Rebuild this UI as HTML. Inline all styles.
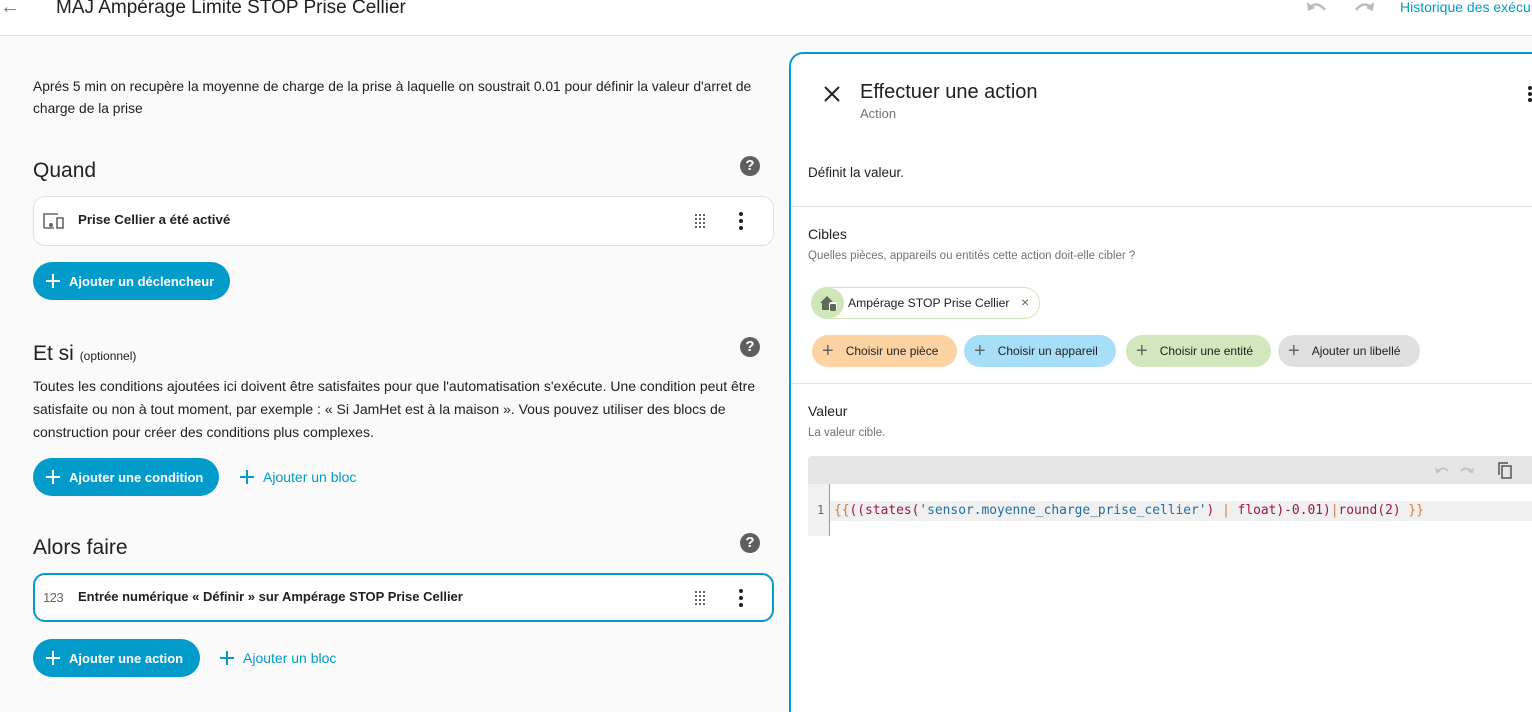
<!DOCTYPE html>
<html><head><meta charset="utf-8"><style>
*{box-sizing:border-box;margin:0;padding:0}
body{width:1532px;height:699px;overflow:hidden;background:#fafafa;font-family:"Liberation Sans",sans-serif;color:#212121;position:relative}
.top{position:absolute;left:0;top:0;width:1532px;height:36px;background:#fff;border-bottom:1px solid #e0e0e0}
.abs{position:absolute;white-space:nowrap}
.btn{position:absolute;height:38px;border-radius:19px;background:#039bc9;color:#fff;font-size:13px;font-weight:bold;display:flex;align-items:center;padding-left:12px}
.btn svg,.lnk svg{margin-right:8px}
.lnk{position:absolute;color:#039bc9;font-size:14px;display:flex;align-items:center}
.card{position:absolute;left:33px;width:741px;height:50px;background:#fff;border:1px solid #e0e0e0;border-radius:12px}
.h2{position:absolute;font-size:21px;color:#212121}
.q{position:absolute;width:20px;height:20px;border-radius:50%;background:#5f5f5f;color:#fff;font-size:15px;font-weight:bold;text-align:center;line-height:20px}
.chip{position:absolute;top:335px;height:32px;border-radius:16px;font-size:12px;display:flex;align-items:center;padding-left:10px;color:#212121}
.chip b{font-weight:normal;font-size:20px;color:#666;margin-right:12px;line-height:1}
</style></head><body>
<div class="top"></div>
<div class="abs" style="left:0;top:-4px;font-size:20px;color:#777">&#8592;</div>
<div class="abs" style="left:56px;top:-3px;font-size:19px;color:#212121">MAJ Ampérage Limite STOP Prise Cellier</div>
<svg class="abs" style="left:1305px;top:0" width="24" height="14" viewBox="0 0 24 14"><path d="M4 8 Q12 0 20 10" stroke="#bbb" stroke-width="2.5" fill="none"/><path d="M2 2 L3 11 L10 8Z" fill="#bbb"/></svg>
<svg class="abs" style="left:1352px;top:0" width="24" height="14" viewBox="0 0 24 14"><path d="M20 8 Q12 0 4 10" stroke="#bbb" stroke-width="2.5" fill="none"/><path d="M22 2 L21 11 L14 8Z" fill="#bbb"/></svg>
<div class="abs" style="left:1400px;top:-1px;font-size:14px;color:#039bc9">Historique des exécu</div>

<div class="abs" style="left:33px;top:76px;font-size:13.8px;line-height:22px;white-space:normal;width:745px">Aprés 5 min on recupère la moyenne de charge de la prise à laquelle on soustrait 0.01 pour définir la valeur d'arret de charge de la prise</div>

<div class="h2" style="left:33px;top:159px">Quand</div>
<div class="q" style="left:740px;top:156px">?</div>
<div class="card" style="top:196px"></div>
<svg class="abs" style="left:43px;top:212px" width="22" height="18" viewBox="0 0 22 18"><path d="M1 16V2h14M1 16h10" stroke="#666" stroke-width="1.6" fill="none"/><rect x="14" y="6" width="6" height="10" stroke="#666" stroke-width="1.6" fill="none"/><circle cx="8" cy="13" r="2" fill="#666"/></svg>
<div class="abs" style="left:78px;top:212px;font-size:13.3px;font-weight:bold">Prise Cellier a été activé</div>
<svg class="abs" style="left:694px;top:213px" width="14" height="16"><g fill="#333"><circle cx="2" cy="2" r="1"/><circle cx="6" cy="2" r="1"/><circle cx="10" cy="2" r="1"/><circle cx="2" cy="6" r="1"/><circle cx="6" cy="6" r="1"/><circle cx="10" cy="6" r="1"/><circle cx="2" cy="10" r="1"/><circle cx="6" cy="10" r="1"/><circle cx="10" cy="10" r="1"/><circle cx="2" cy="14" r="1"/><circle cx="6" cy="14" r="1"/><circle cx="10" cy="14" r="1"/></g></svg>
<svg class="abs" style="left:737px;top:211px" width="8" height="20"><g fill="#212121"><circle cx="4" cy="3" r="2"/><circle cx="4" cy="10" r="2"/><circle cx="4" cy="17" r="2"/></g></svg>

<div class="btn" style="left:33px;top:262px;width:197px"><svg width="16" height="16"><path d="M8 1v14M1 8h14" stroke="#fff" stroke-width="2"/></svg>Ajouter un déclencheur</div>

<div class="h2" style="left:33px;top:342px">Et si <span style="font-size:12px">(optionnel)</span></div>
<div class="q" style="left:740px;top:337px">?</div>
<div class="abs" style="left:33px;top:375px;font-size:14px;line-height:23px;white-space:normal;width:760px">Toutes les conditions ajoutées ici doivent être satisfaites pour que l'automatisation s'exécute. Une condition peut être satisfaite ou non à tout moment, par exemple : « Si JamHet est à la maison ». Vous pouvez utiliser des blocs de construction pour créer des conditions plus complexes.</div>
<div class="btn" style="left:33px;top:458px;width:186px"><svg width="16" height="16"><path d="M8 1v14M1 8h14" stroke="#fff" stroke-width="2"/></svg>Ajouter une condition</div>
<div class="lnk" style="left:239px;top:469px"><svg width="16" height="16"><path d="M8 1v14M1 8h14" stroke="#039bc9" stroke-width="2"/></svg>Ajouter un bloc</div>

<div class="h2" style="left:33px;top:536px">Alors faire</div>
<div class="q" style="left:740px;top:533px">?</div>
<div class="card" style="top:573px;height:49px;border:2px solid #039bc9"></div>
<div class="abs" style="left:43px;top:590px;font-size:13px;color:#666;letter-spacing:-0.5px">123</div>
<div class="abs" style="left:78px;top:589px;font-size:13px;font-weight:bold">Entrée numérique « Définir » sur Ampérage STOP Prise Cellier</div>
<svg class="abs" style="left:694px;top:590px" width="14" height="16"><g fill="#333"><circle cx="2" cy="2" r="1"/><circle cx="6" cy="2" r="1"/><circle cx="10" cy="2" r="1"/><circle cx="2" cy="6" r="1"/><circle cx="6" cy="6" r="1"/><circle cx="10" cy="6" r="1"/><circle cx="2" cy="10" r="1"/><circle cx="6" cy="10" r="1"/><circle cx="10" cy="10" r="1"/><circle cx="2" cy="14" r="1"/><circle cx="6" cy="14" r="1"/><circle cx="10" cy="14" r="1"/></g></svg>
<svg class="abs" style="left:737px;top:588px" width="8" height="20"><g fill="#212121"><circle cx="4" cy="3" r="2"/><circle cx="4" cy="10" r="2"/><circle cx="4" cy="17" r="2"/></g></svg>
<div class="btn" style="left:33px;top:639px;width:167px"><svg width="16" height="16"><path d="M8 1v14M1 8h14" stroke="#fff" stroke-width="2"/></svg>Ajouter une action</div>
<div class="lnk" style="left:219px;top:650px"><svg width="16" height="16"><path d="M8 1v14M1 8h14" stroke="#039bc9" stroke-width="2"/></svg>Ajouter un bloc</div>

<!-- panel -->
<div class="abs" style="left:789px;top:52px;width:760px;height:660px;background:#fff;border:2px solid #039bc9;border-right:none;border-bottom:none;border-top-left-radius:14px"></div>
<svg class="abs" style="left:823px;top:85px" width="18" height="18"><path d="M2 2L16 16M16 2L2 16" stroke="#212121" stroke-width="2"/></svg>
<div class="abs" style="left:860px;top:81px;font-size:20px">Effectuer une action</div>
<div class="abs" style="left:860px;top:106px;font-size:13px;color:#727272">Action</div>
<svg class="abs" style="left:1526px;top:86px" width="6" height="18"><g fill="#212121"><circle cx="4" cy="2" r="2"/><circle cx="4" cy="8" r="2"/><circle cx="4" cy="14" r="2"/></g></svg>
<div class="abs" style="left:808px;top:165px;font-size:13.5px">Définit la valeur.</div>
<div class="abs" style="left:791px;top:206px;width:741px;height:1px;background:#e0e0e0"></div>
<div class="abs" style="left:808px;top:226px;font-size:14px">Cibles</div>
<div class="abs" style="left:808px;top:250px;font-size:11.5px;color:#727272">Quelles pièces, appareils ou entités cette action doit-elle cibler ?</div>
<div class="abs" style="left:811px;top:287px;width:229px;height:32px;border:1px solid #cfe6b8;border-radius:16px;background:#fff"></div>
<div class="abs" style="left:812px;top:288px;width:32px;height:30px;border-radius:15px;background:#cfe6b8"></div>
<svg class="abs" style="left:819px;top:294px" width="20" height="18"><path d="M1 9L8 2L14 8V16H3V9Z" fill="#5f6b55"/><rect x="10" y="8" width="8" height="9" rx="2" fill="#fff"/><rect x="11" y="10" width="6" height="7" rx="1" fill="#5f6b55"/></svg>
<div class="abs" style="left:848px;top:296px;font-size:12.2px">Ampérage STOP Prise Cellier</div>
<div class="abs" style="left:1021px;top:294px;font-size:14px;color:#666">×</div>
<div class="chip" style="left:812px;width:145px;background:#fdd3a3"><b>+</b>Choisir une pièce</div>
<div class="chip" style="left:964px;width:152px;background:#a8dff8"><b>+</b>Choisir un appareil</div>
<div class="chip" style="left:1126px;width:145px;background:#d2e7bd"><b>+</b>Choisir une entité</div>
<div class="chip" style="left:1278px;width:142px;background:#e0e0e0"><b>+</b>Ajouter un libellé</div>
<div class="abs" style="left:791px;top:383px;width:741px;height:1px;background:#e0e0e0"></div>
<div class="abs" style="left:808px;top:403px;font-size:14px">Valeur</div>
<div class="abs" style="left:808px;top:427px;font-size:11.5px;color:#727272">La valeur cible.</div>
<div class="abs" style="left:808px;top:456px;width:724px;height:80px;background:#e6e6e6;border-top-left-radius:4px"></div>
<svg class="abs" style="left:1434px;top:461px" width="90" height="18"><path d="M3 12 Q8 4 14 10" stroke="#c4c4c4" stroke-width="2" fill="none"/><path d="M1 6L2 12L7 11Z" fill="#c4c4c4"/><path d="M38 12 Q33 4 27 10" stroke="#c4c4c4" stroke-width="2" fill="none"/><path d="M40 6L39 12L34 11Z" fill="#c4c4c4"/><rect x="68" y="5" width="9" height="12" stroke="#555" stroke-width="1.5" fill="none"/><path d="M65 14V2H74" stroke="#555" stroke-width="1.5" fill="none"/></svg>
<div class="abs" style="left:808px;top:484px;width:21px;height:52px;background:#f2f2f2"></div>
<div class="abs" style="left:829px;top:484px;width:703px;height:52px;background:#fff;border-left:1px solid #999"></div>
<div class="abs" style="left:830px;top:501px;width:702px;height:20px;background:#f0f0f0"></div>
<div class="abs" style="left:817px;top:503px;font-size:12px;color:#666;font-family:'DejaVu Sans Mono',monospace">1</div>
<div class="abs" style="left:834px;top:503px;font-size:12.9px;font-family:'DejaVu Sans Mono','Liberation Mono',monospace;color:#a0144f;letter-spacing:0"><span style="color:#d08040">{{</span>((states(<span style="color:#1f6fa0">'sensor.moyenne_charge_prise_cellier'</span>) <span style="color:#d08040">|</span> float)-0.01)<span style="color:#d08040">|</span>round(2) <span style="color:#d08040">}}</span></div>
</body></html>
